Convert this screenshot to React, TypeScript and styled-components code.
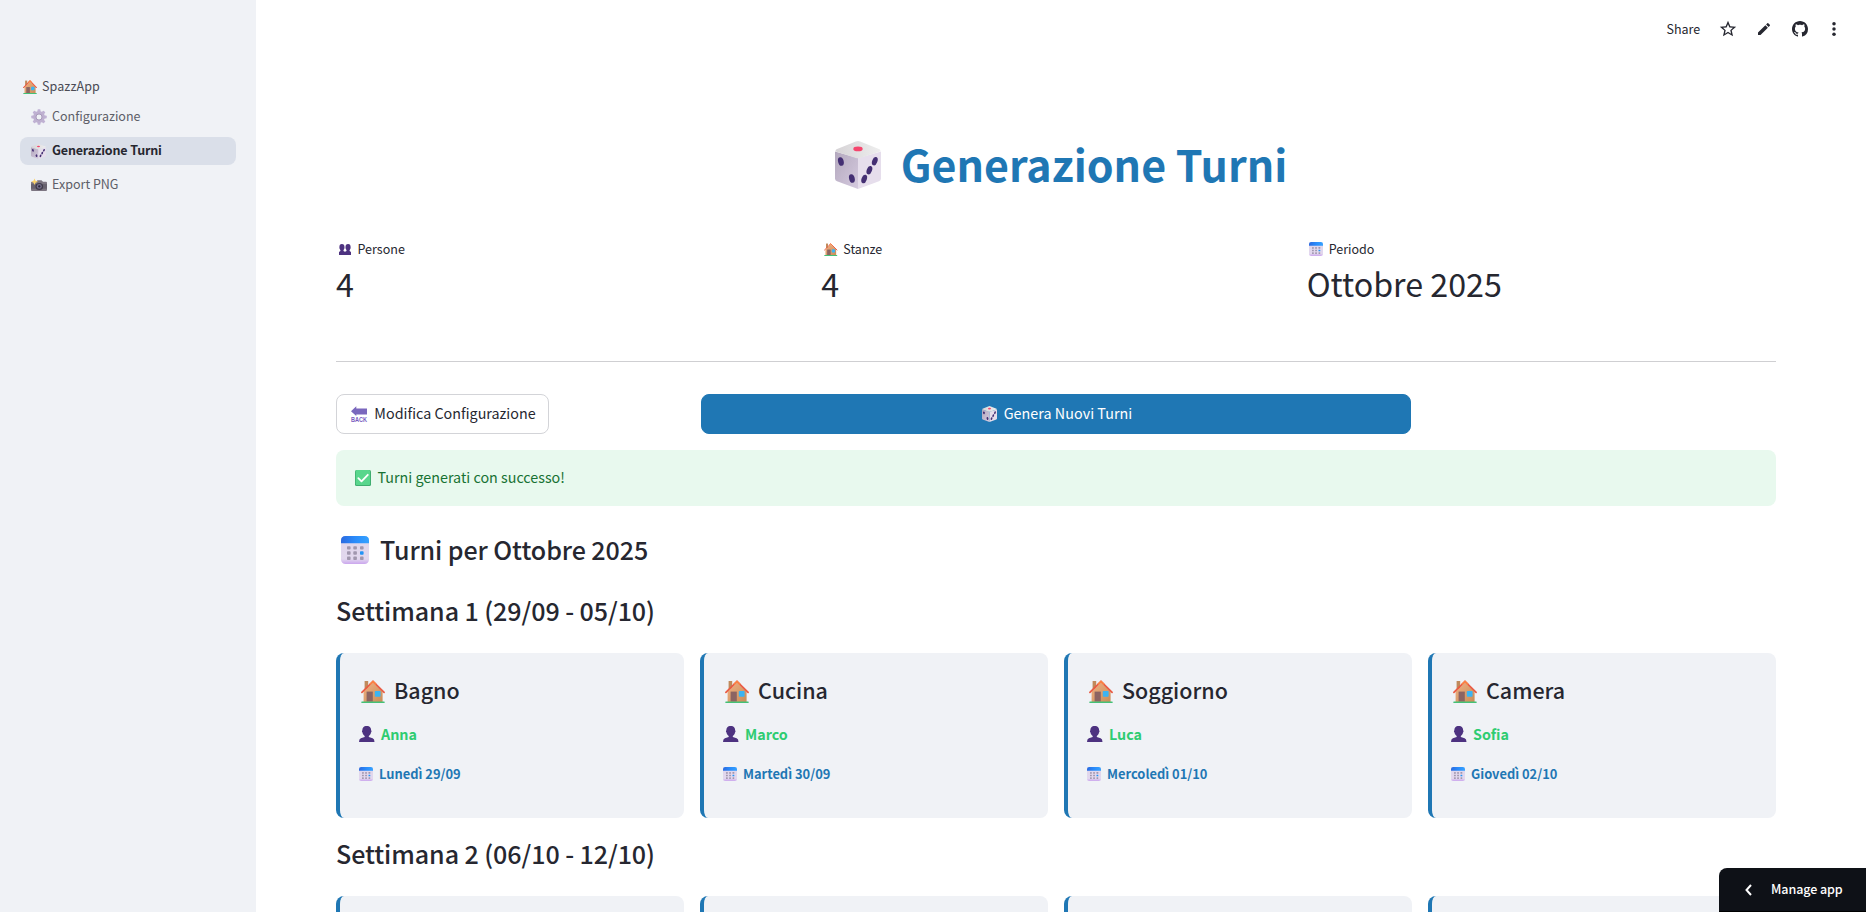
import React, { useId } from "react";
import styled, { createGlobalStyle } from "styled-components";

const Global = createGlobalStyle`
  * { box-sizing: border-box; }
  html, body { margin: 0; padding: 0; height: 912px; overflow: hidden; background: #fff; }
  body {
    font-family: "Source Sans Pro", "Noto Sans CJK SC", sans-serif;
    color: #262730;
  }
`;

/* ---------- emoji drawings ---------- */

const Glyph = styled.svg<{ $w: number; $h: number }>`
  display: block;
  flex: none;
  width: ${(p) => p.$w}px;
  height: ${(p) => p.$h}px;
  overflow: visible;
`;

type IconProps = { w: number; h: number };

const House = ({ w, h }: IconProps) => {
  const id = useId();
  return (
    <Glyph $w={w} $h={h} viewBox="0 0 24 23" preserveAspectRatio="none">
      <defs>
        <linearGradient id={id} x1="0" y1="0" x2="1" y2="1">
          <stop offset="0" stopColor="#f0b183" />
          <stop offset="1" stopColor="#c98d58" />
        </linearGradient>
      </defs>
      <rect x="3.6" y="1" width="3.6" height="8" fill="#c08a5c" />
      <path d="M2.6 11.6 12 2.4l9.6 9.2V22H2.6Z" fill={`url(#${id})`} />
      <rect x="5.6" y="11.6" width="6.2" height="10" fill="#8c6462" />
      <rect x="13.8" y="11" width="5.8" height="5.8" rx=".8" fill="#3bb4f2" />
      <path d="M.9 12.4 12 1.4l11.1 11" fill="none" stroke="#ea5a42" strokeWidth="1.7" strokeLinecap="round" />
      <path d="M8.9 4.4 12 1.4l3.1 3" fill="none" stroke="#fb8345" strokeWidth="1.7" />
      <rect x=".2" y="21.4" width="23.6" height="1.6" rx=".8" fill="#44c176" />
    </Glyph>
  );
};

const Die = ({ w, h }: IconProps) => {
  const id = useId();
  return (
    <Glyph $w={w} $h={h} viewBox="0 0 46 48" preserveAspectRatio="none">
      <defs>
        <linearGradient id={`${id}l`} x1="0" y1="0" x2="1" y2="1">
          <stop offset="0" stopColor="#b3a8bd" />
          <stop offset="1" stopColor="#d5cadf" />
        </linearGradient>
        <linearGradient id={`${id}t`} x1="0" y1="0" x2="1" y2="0">
          <stop offset="0" stopColor="#d6d3d6" />
          <stop offset="1" stopColor="#eeeeee" />
        </linearGradient>
      </defs>
      <path d="M0 10.5 23 17v31L2 40.3Q0 39.5 0 37.5Z" fill={`url(#${id}l)`} />
      <path d="M46 10.5 23 17v31l21-7.7Q46 39.5 46 37.5Z" fill="#e6deec" />
      <path d="M20.8.6Q23-.4 25.2.6L44.5 8.3Q46.5 9.6 44.5 10.7L25 17Q23 17.7 21 17L1.5 10.7Q-.5 9.6 1.5 8.3Z" fill={`url(#${id}t)`} />
      <ellipse cx="23" cy="7.9" rx="4.7" ry="2.4" fill="#f5456d" />
      <g fill="#442f73">
        <ellipse cx="5.9" cy="20.5" rx="2.8" ry="4.4" transform="rotate(-14 5.9 20.5)" />
        <ellipse cx="16.9" cy="37.5" rx="2.8" ry="4.4" transform="rotate(-14 16.9 37.5)" />
        <ellipse cx="39.8" cy="20.2" rx="2.6" ry="4.4" transform="rotate(20 39.8 20.2)" />
        <ellipse cx="34.4" cy="29.2" rx="2.6" ry="4.4" transform="rotate(20 34.4 29.2)" />
        <ellipse cx="29.2" cy="38" rx="2.6" ry="4.4" transform="rotate(20 29.2 38)" />
      </g>
    </Glyph>
  );
};

const Calendar = ({ w, h }: IconProps) => {
  const id = useId();
  return (
    <Glyph $w={w} $h={h} viewBox="0 0 28 28" preserveAspectRatio="none">
      <defs>
        <linearGradient id={`${id}h`} x1="0" y1="0" x2="1" y2="0">
          <stop offset="0" stopColor="#2b6ae0" />
          <stop offset=".5" stopColor="#2a8bfa" />
          <stop offset="1" stopColor="#35a2ff" />
        </linearGradient>
        <linearGradient id={`${id}b`} x1="0" y1="0" x2="0" y2="1">
          <stop offset="0" stopColor="#e0d6ea" />
          <stop offset=".82" stopColor="#e2d8ee" />
          <stop offset="1" stopColor="#cba6ee" />
        </linearGradient>
      </defs>
      <rect width="28" height="28" rx="4.5" fill={`url(#${id}b)`} />
      <path d="M0 7.3V4.5Q0 0 4.5 0h19Q28 0 28 4.5v2.8Z" fill={`url(#${id}h)`} />
      <g fill="#a197ae">
        {[10.2, 15.3, 20.6].map((y, r) =>
          [6, 12.3, 19].map((x, c) => (
            <rect key={`${r}${c}`} x={x} y={y} width="3.6" height="3.4" rx=".8" fill={r === 1 && c === 2 ? "#2494f5" : undefined} />
          ))
        )}
      </g>
    </Glyph>
  );
};

const Person = ({ w, h }: IconProps) => (
  <Glyph $w={w} $h={h} viewBox="0 0 15 16" preserveAspectRatio="none">
    <path d="M7.500 0C10.600 0 11.700 2 11.700 4.200c.6.300.6 1.900-.1 2.200-.3 1.700-1 2.700-2.100 3.500v1l3.700 1.300Q15 12.900 15 16H0q0-3.100 1.800-3.800l3.700-1.300v-1C4.400 9.100 3.700 8.100 3.400 6.400c-.7-.3-.7-1.900-.1-2.200C3.300 2 4.400 0 7.500 0Z" fill="#4d3280" />
  </Glyph>
);

const People = ({ w, h }: IconProps) => (
  <Glyph $w={w} $h={h} viewBox="0 0 12 11" preserveAspectRatio="none">
    <path d="M2.900 0C4.700 0 5.500 1.100 5.500 3v1.200L4.500 6.300v.8L6 7.800l1.500-.7v-.8L6.500 4.200V3C6.500 1.100 7.300 0 9.100 0s2.500 1.100 2.500 3v1.200l-1 2.100v.8L12 8v3H0V8l1.400-.9v-.8L.4 4.200V3C.4 1.100 1.100 0 2.900 0Z" fill="#4d3280" />
  </Glyph>
);

const Gear = ({ w, h }: IconProps) => (
  <Glyph $w={w} $h={h} viewBox="-8 -8 16 16">
    <g fill="#c0b2d4">
      {[0, 45, 90, 135, 180, 225, 270, 315].map((a) => (
        <rect key={a} x="-1.5" y="-7.7" width="3" height="4" rx=".7" transform={`rotate(${a})`} />
      ))}
    </g>
    <circle r="4.4" fill="none" stroke="#beb0d0" strokeWidth="3" />
    <circle r="3" fill="none" stroke="#9f90b3" strokeWidth=".8" />
  </Glyph>
);

const Camera = ({ w, h }: IconProps) => (
  <Glyph $w={w} $h={h} viewBox="0 0 16 13" preserveAspectRatio="none">
    <path d="M1 3h4l1.500-1.700h4L12 3h3q1 0 1 1v8q0 1-1 1H1q-1 0-1-1V4q0-1 1-1Z" fill="#7d7682" />
    <path d="M0 5.500h16v5H0Z" fill="#68626f" />
    <circle cx="8.300" cy="8" r="3.800" fill="#403b4b" />
    <circle cx="8.300" cy="8" r="2.500" fill="#77718c" />
    <circle cx="8.300" cy="8" r="1.200" fill="#2a2638" />
    <path d="m3.500-.5 1 2.300L7 3 4.500 4.100l-1 2.400-1-2.400L.3 3l2.200-1.200Z" fill="#fbd36b" />
  </Glyph>
);

const Back = ({ w, h }: IconProps) => (
  <Glyph $w={w} $h={h} viewBox="0 0 16 16">
    <path d="M5.300.2v2.300H16v6H5.300v1.500L0 5.300Z" fill="#7a67bd" />
    <text x="0" y="16" textLength="16" lengthAdjust="spacingAndGlyphs" fontFamily="Liberation Sans" fontWeight="700" fontSize="6.6" fill="#7a5cc0">BACK</text>
  </Glyph>
);

const Check = ({ w, h }: IconProps) => (
  <Glyph $w={w} $h={h} viewBox="0 0 16 16">
    <rect width="16" height="16" rx="1.5" fill="#3fae70" />
    <rect x=".8" y="0" width="14.2" height="15" rx="1" fill="#58d68c" />
    <path d="m3.300 8.200 3.200 3.200 6.300-6.600" fill="none" stroke="#fff" strokeWidth="1.8" strokeLinecap="round" strokeLinejoin="round" />
  </Glyph>
);

/* ---------- layout ---------- */

const Shell = styled.div`
  display: flex;
  width: 1866px;
  height: 912px;
  overflow: hidden;
`;

const Sidebar = styled.nav`
  flex: none;
  width: 256px;
  padding: 73px 20px 0;
  background: #f0f2f6;
`;

const Text = styled.span<{ $size: number; $weight?: number; $track?: number; $color?: string; $gap?: number; $lift?: number }>`
  flex: none;
  white-space: nowrap;
  font-size: ${(p) => p.$size * 0.895}px;
  font-weight: ${(p) => p.$weight ?? 400};
  letter-spacing: ${(p) => p.$track ?? 0}px;
  color: ${(p) => p.$color ?? "inherit"};
  margin-left: ${(p) => p.$gap ?? 0}px;
  padding-bottom: ${(p) => (p.$lift ?? 0) * 2}px;
`;

const AppName = styled.div`
  display: flex;
  align-items: center;
  height: 28px;
  padding-left: 3px;
  line-height: 20px;
  color: #4a4b54;
  margin-bottom: 2px;
`;

const NavItem = styled.a<{ $active?: boolean }>`
  display: flex;
  align-items: center;
  height: 28px;
  margin-bottom: 6px;
  padding-left: 11px;
  line-height: 20px;
  border-radius: 8px;
  color: ${(p) => (p.$active ? "#262730" : "#5d5e68")};
  background: ${(p) => (p.$active ? "#dadfe9" : "transparent")};
`;

const Main = styled.main`
  flex: 1;
  min-width: 0;
  height: 912px;
  overflow: hidden;
`;

const Toolbar = styled.header`
  display: flex;
  align-items: center;
  height: 58px;
  padding-left: 1410.5px;
  line-height: 20px;
`;

const ToolIcon = styled.svg<{ $size: number; $left: number }>`
  flex: none;
  width: ${(p) => p.$size}px;
  height: ${(p) => p.$size}px;
  margin-left: ${(p) => p.$left}px;
  fill: #262730;
`;

const Content = styled.div`
  width: 1440px;
  margin-left: 80px;
`;

const Title = styled.h1`
  display: flex;
  justify-content: center;
  align-items: center;
  height: 58px;
  margin: 78px 0 0;
  padding-left: 10px;
  line-height: 58px;
`;

const Metrics = styled.section`
  display: grid;
  grid-template-columns: repeat(3, 1fr);
  gap: 16px;
  margin-top: 45px;
`;

const MetricLabel = styled.div`
  display: flex;
  align-items: center;
  height: 20px;
  padding-left: 2.5px;
  line-height: 20px;
`;

const MetricValue = styled.div`
  display: flex;
  align-items: center;
  height: 52px;
  line-height: 48px;
`;

const Divider = styled.hr`
  height: 1px;
  margin: 50px 0 32px;
  border: 0;
  background: #cfcfd2;
`;

const Actions = styled.section`
  display: grid;
  grid-template-columns: 349px 710px 349px;
  gap: 16px;
`;

const Button = styled.button<{ $primary?: boolean }>`
  display: flex;
  align-items: center;
  justify-content: center;
  width: ${(p) => (p.$primary ? "710px" : "213px")};
  height: 40px;
  padding: 0 0 0 2px;
  border: 1px solid ${(p) => (p.$primary ? "#1f77b4" : "#d3d4d8")};
  border-radius: 8px;
  font-family: inherit;
  line-height: 24px;
  color: ${(p) => (p.$primary ? "#fff" : "#262730")};
  background: ${(p) => (p.$primary ? "#1f77b4" : "#fff")};
`;

const Alert = styled.div`
  display: flex;
  align-items: center;
  height: 56px;
  margin-top: 16px;
  padding-left: 19px;
  border-radius: 8px;
  line-height: 24px;
  color: #177233;
  background: #e8f9ee;
`;

const Heading = styled.h3<{ $top: number; $pad: number }>`
  display: flex;
  align-items: center;
  height: 34px;
  margin: ${(p) => p.$top}px 0 0;
  padding-left: ${(p) => p.$pad}px;
  line-height: 34px;
`;

const Cards = styled.div<{ $top: number }>`
  display: grid;
  grid-template-columns: repeat(4, 1fr);
  gap: 16px;
  margin-top: ${(p) => p.$top}px;
`;

const Card = styled.article`
  height: 165px;
  padding: 20px 0 0 19px;
  border-left: 4px solid #1f77b4;
  border-radius: 8px;
  background: #f0f2f6;
`;

const CardTitle = styled.h4`
  display: flex;
  align-items: center;
  height: 36px;
  margin: 0;
  padding-left: 1.5px;
  line-height: 36px;
`;

const CardLine = styled.div<{ $top: number }>`
  display: flex;
  align-items: center;
  height: 24px;
  margin-top: ${(p) => p.$top}px;
  line-height: 24px;
`;

const ManageApp = styled.button`
  position: fixed;
  right: 0;
  bottom: 0;
  display: flex;
  align-items: center;
  width: 147px;
  height: 44px;
  padding: 0 0 0 26px;
  border: 0;
  border-bottom: 1px solid #000;
  border-radius: 8px 0 0 0;
  font-family: inherit;
  line-height: 20px;
  color: #fff;
  background: #0e1117;
`;

const Chevron = styled.svg`
  flex: none;
  width: 7px;
  height: 12px;
`;

type Turn = { room: string; who: string; day: string };

const weekOne: Turn[] = [
  { room: "Bagno", who: "Anna", day: "Lunedì 29/09" },
  { room: "Cucina", who: "Marco", day: "Martedì 30/09" },
  { room: "Soggiorno", who: "Luca", day: "Mercoledì 01/10" },
  { room: "Camera", who: "Sofia", day: "Giovedì 02/10" },
];

const TurnCard = ({ room, who, day }: Turn) => (
  <Card>
    <CardTitle>
      <House w={24} h={23} />
      <Text $size={24} $weight={500} $gap={9.5} $lift={1}>{room}</Text>
    </CardTitle>
    <CardLine $top={13}>
      <Person w={15.5} h={16} />
      <Text $size={16} $weight={700} $color="#2ecc71" $gap={6.5}>{who}</Text>
    </CardLine>
    <CardLine $top={16}>
      <Calendar w={14} h={14} />
      <Text $size={14.4} $weight={700} $color="#1f77b4" $gap={6}>{day}</Text>
    </CardLine>
  </Card>
);

export default function App() {
  return (
    <Shell>
      <Global />
      <Sidebar>
        <AppName>
          <House w={14} h={14} />
          <Text $size={14} $gap={5} $lift={1} $track={0.1}>SpazzApp</Text>
        </AppName>
        <NavItem>
          <Gear w={16} h={16} />
          <Text $size={14} $gap={5} $lift={1}>Configurazione</Text>
        </NavItem>
        <NavItem $active>
          <Die w={15} h={15} />
          <Text $size={14} $weight={600} $gap={6} $lift={1} $track={-0.17}>Generazione Turni</Text>
        </NavItem>
        <NavItem>
          <Camera w={16} h={12} />
          <Text $size={14} $gap={5} $lift={1}>Export PNG</Text>
        </NavItem>
      </Sidebar>
      <Main>
        <Toolbar>
          <Text $size={14}>Share</Text>
          <ToolIcon $size={18} $left={18.5} viewBox="1 1 22 22">
            <path d="m22 9.240-7.190-.62L12 2 9.190 8.630 2 9.240l5.460 4.730L5.820 21 12 17.270 18.180 21l-1.630-7.030L22 9.240ZM12 15.400l-3.760 2.270 1-4.280-3.320-2.880 4.380-.38L12 6.100l1.710 4.040 4.380.38-3.320 2.880 1 4.280L12 15.400Z" />
          </ToolIcon>
          <ToolIcon $size={16} $left={19} viewBox="0 0 24 24">
            <path d="M3 17.250V21h3.750L17.810 9.940l-3.750-3.750L3 17.250ZM20.710 7.040a.996.996 0 0 0 0-1.410l-2.340-2.340a.996.996 0 0 0-1.410 0l-1.830 1.830 3.750 3.750 1.830-1.830Z" />
          </ToolIcon>
          <ToolIcon $size={16} $left={20} viewBox="0 0 16 16">
            <path d="M8 0C3.580 0 0 3.580 0 8c0 3.540 2.290 6.530 5.470 7.590.4.070.55-.17.55-.38 0-.19-.01-.82-.01-1.490-2.010.37-2.530-.49-2.690-.94-.09-.23-.48-.94-.82-1.130-.28-.15-.68-.52-.01-.53.63-.01 1.080.58 1.230.82.72 1.210 1.870.87 2.330.66.07-.52.28-.87.51-1.070-1.780-.2-3.640-.89-3.640-3.950 0-.87.31-1.590.82-2.150-.08-.2-.36-1.020.08-2.120 0 0 .67-.21 2.200.82.64-.18 1.320-.27 2-.27s1.360.09 2 .27c1.530-1.040 2.200-.82 2.200-.82.44 1.100.16 1.920.08 2.120.51.56.82 1.270.82 2.150 0 3.070-1.870 3.750-3.650 3.950.29.25.54.73.54 1.480 0 1.070-.01 1.930-.01 2.200 0 .21.15.46.55.38A8.010 8.010 0 0 0 16 8c0-4.420-3.580-8-8-8Z" />
          </ToolIcon>
          <ToolIcon $size={20} $left={16} viewBox="0 0 24 24">
            <circle cx="12" cy="5.8" r="2.1" />
            <circle cx="12" cy="12" r="2.1" />
            <circle cx="12" cy="18.2" r="2.1" />
          </ToolIcon>
        </Toolbar>
        <Content>
          <Title>
            <Die w={46} h={48} />
            <Text $size={48} $weight={700} $color="#1f77b4" $gap={20} $lift={2}>Generazione Turni</Text>
          </Title>
          <Metrics>
            <div>
              <MetricLabel>
                <People w={12} h={11} />
                <Text $size={14} $gap={7}>Persone</Text>
              </MetricLabel>
              <MetricValue><Text $size={36} $lift={2}>4</Text></MetricValue>
            </div>
            <div>
              <MetricLabel>
                <House w={13.5} h={13} />
                <Text $size={14} $gap={6}>Stanze</Text>
              </MetricLabel>
              <MetricValue><Text $size={36} $lift={2}>4</Text></MetricValue>
            </div>
            <div>
              <MetricLabel>
                <Calendar w={14} h={14} />
                <Text $size={14} $gap={5.5}>Periodo</Text>
              </MetricLabel>
              <MetricValue><Text $size={36} $lift={2}>Ottobre 2025</Text></MetricValue>
            </div>
          </Metrics>
          <Divider />
          <Actions>
            <Button>
              <Back w={16} h={16} />
              <Text $size={16} $gap={7} $lift={1}>Modifica Configurazione</Text>
            </Button>
            <Button $primary>
              <Die w={15} h={16} />
              <Text $size={16} $gap={7} $lift={1} $track={0.04}>Genera Nuovi Turni</Text>
            </Button>
          </Actions>
          <Alert>
            <Check w={16} h={16} />
            <Text $size={16} $gap={6.5} $lift={1}>Turni generati con successo!</Text>
          </Alert>
          <Heading $top={27} $pad={5}>
            <Calendar w={28} h={28} />
            <Text $size={28} $weight={500} $gap={11} $lift={1} $track={-0.08}>Turni per Ottobre 2025</Text>
          </Heading>
          <Heading $top={27} $pad={0}>
            <Text $size={28} $weight={500} $lift={1} $track={-0.08}>Settimana 1 (29/09 - 05/10)</Text>
          </Heading>
          <Cards $top={25}>
            {weekOne.map((t) => <TurnCard key={t.room} {...t} />)}
          </Cards>
          <Heading $top={19} $pad={0}>
            <Text $size={28} $weight={500} $lift={1} $track={-0.08}>Settimana 2 (06/10 - 12/10)</Text>
          </Heading>
          <Cards $top={25}>
            <Card /><Card /><Card /><Card />
          </Cards>
        </Content>
      </Main>
      <ManageApp>
        <Chevron viewBox="0 0 7 12">
          <path d="M6 1 1.500 6 6 11" fill="none" stroke="#fff" strokeWidth="2" />
        </Chevron>
        <Text $size={14} $weight={500} $gap={19} $lift={0.5} $track={-0.08}>Manage app</Text>
      </ManageApp>
    </Shell>
  );
}
